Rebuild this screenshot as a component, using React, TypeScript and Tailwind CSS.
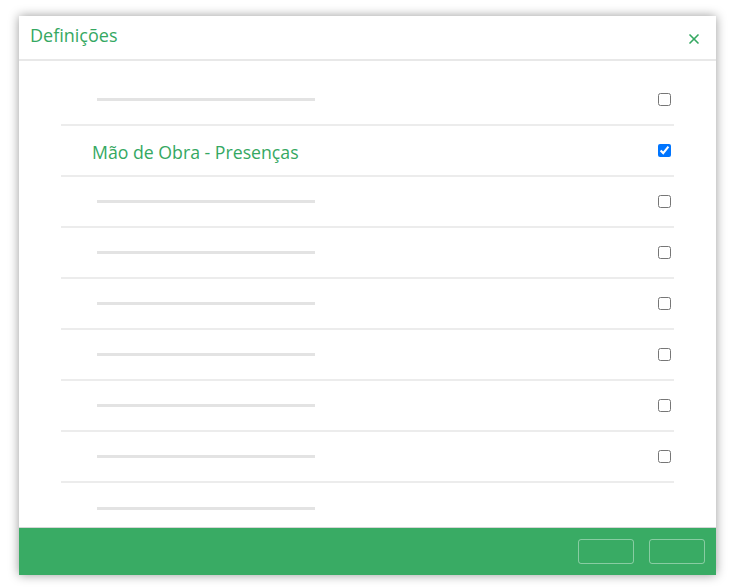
import { X } from 'lucide-react'

type Row = { label?: string; checked?: boolean; box?: boolean }

const rows: Row[] = [
  { box: true },
  { label: 'Mão de Obra - Presenças', checked: true, box: true },
  { box: true },
  { box: true },
  { box: true },
  { box: true },
  { box: true },
  { box: true },
  { box: false },
]

function SettingRow({ row, last }: { row: Row; last: boolean }) {
  return (
    <div className={`flex h-[51px] shrink-0 items-center justify-between pr-[3px] ${last ? '' : 'border-b-2 border-[#ececec]'}`}>
      {row.label ? (
        <span className="pl-[31px] pt-[3px] text-[17.7px] text-[#35a862]">{row.label}</span>
      ) : (
        <span className="ml-[36px] h-[3px] w-[218px] bg-[#e3e3e3]" />
      )}
      {row.box && (
        <input
          type="checkbox"
          defaultChecked={row.checked}
          className="m-0 h-[13px] w-[13px] accent-[#0075ff]"
        />
      )}
    </div>
  )
}

export default function App() {
  return (
    <div className="h-[588px] w-[732px] bg-white pl-[19px] pt-[16px] font-['Open_Sans','Noto_Sans',sans-serif]">
      <div className="flex h-[559px] w-[697px] flex-col bg-white shadow-[0_0_10px_rgba(0,0,0,0.4)]">
        <div className="flex h-[45px] shrink-0 items-center justify-between border-b-2 border-[#e8e8e8] pl-[11px] pr-[14px]">
          <span className="-mt-[4px] text-[18px] text-[#35a862]">Definições</span>
          <X className="mt-[2px] h-[16px] w-[16px] text-[#35a862]" strokeWidth={2.5} />
        </div>

        <div className="flex flex-1 flex-col overflow-hidden pl-[42px] pr-[42px] pt-[14px]">
          {rows.map((r, i) => (
            <SettingRow key={i} row={r} last={i === rows.length - 1} />
          ))}
        </div>

        <div className="flex h-[48px] shrink-0 items-center justify-end gap-[15px] border-t border-[#d6d6d6] bg-[#39ab64] pr-[11px]">
          <button className="h-[25px] w-[56px] rounded-[3px] border border-white/40" />
          <button className="h-[25px] w-[56px] rounded-[3px] border border-white/40" />
        </div>
      </div>
    </div>
  )
}
